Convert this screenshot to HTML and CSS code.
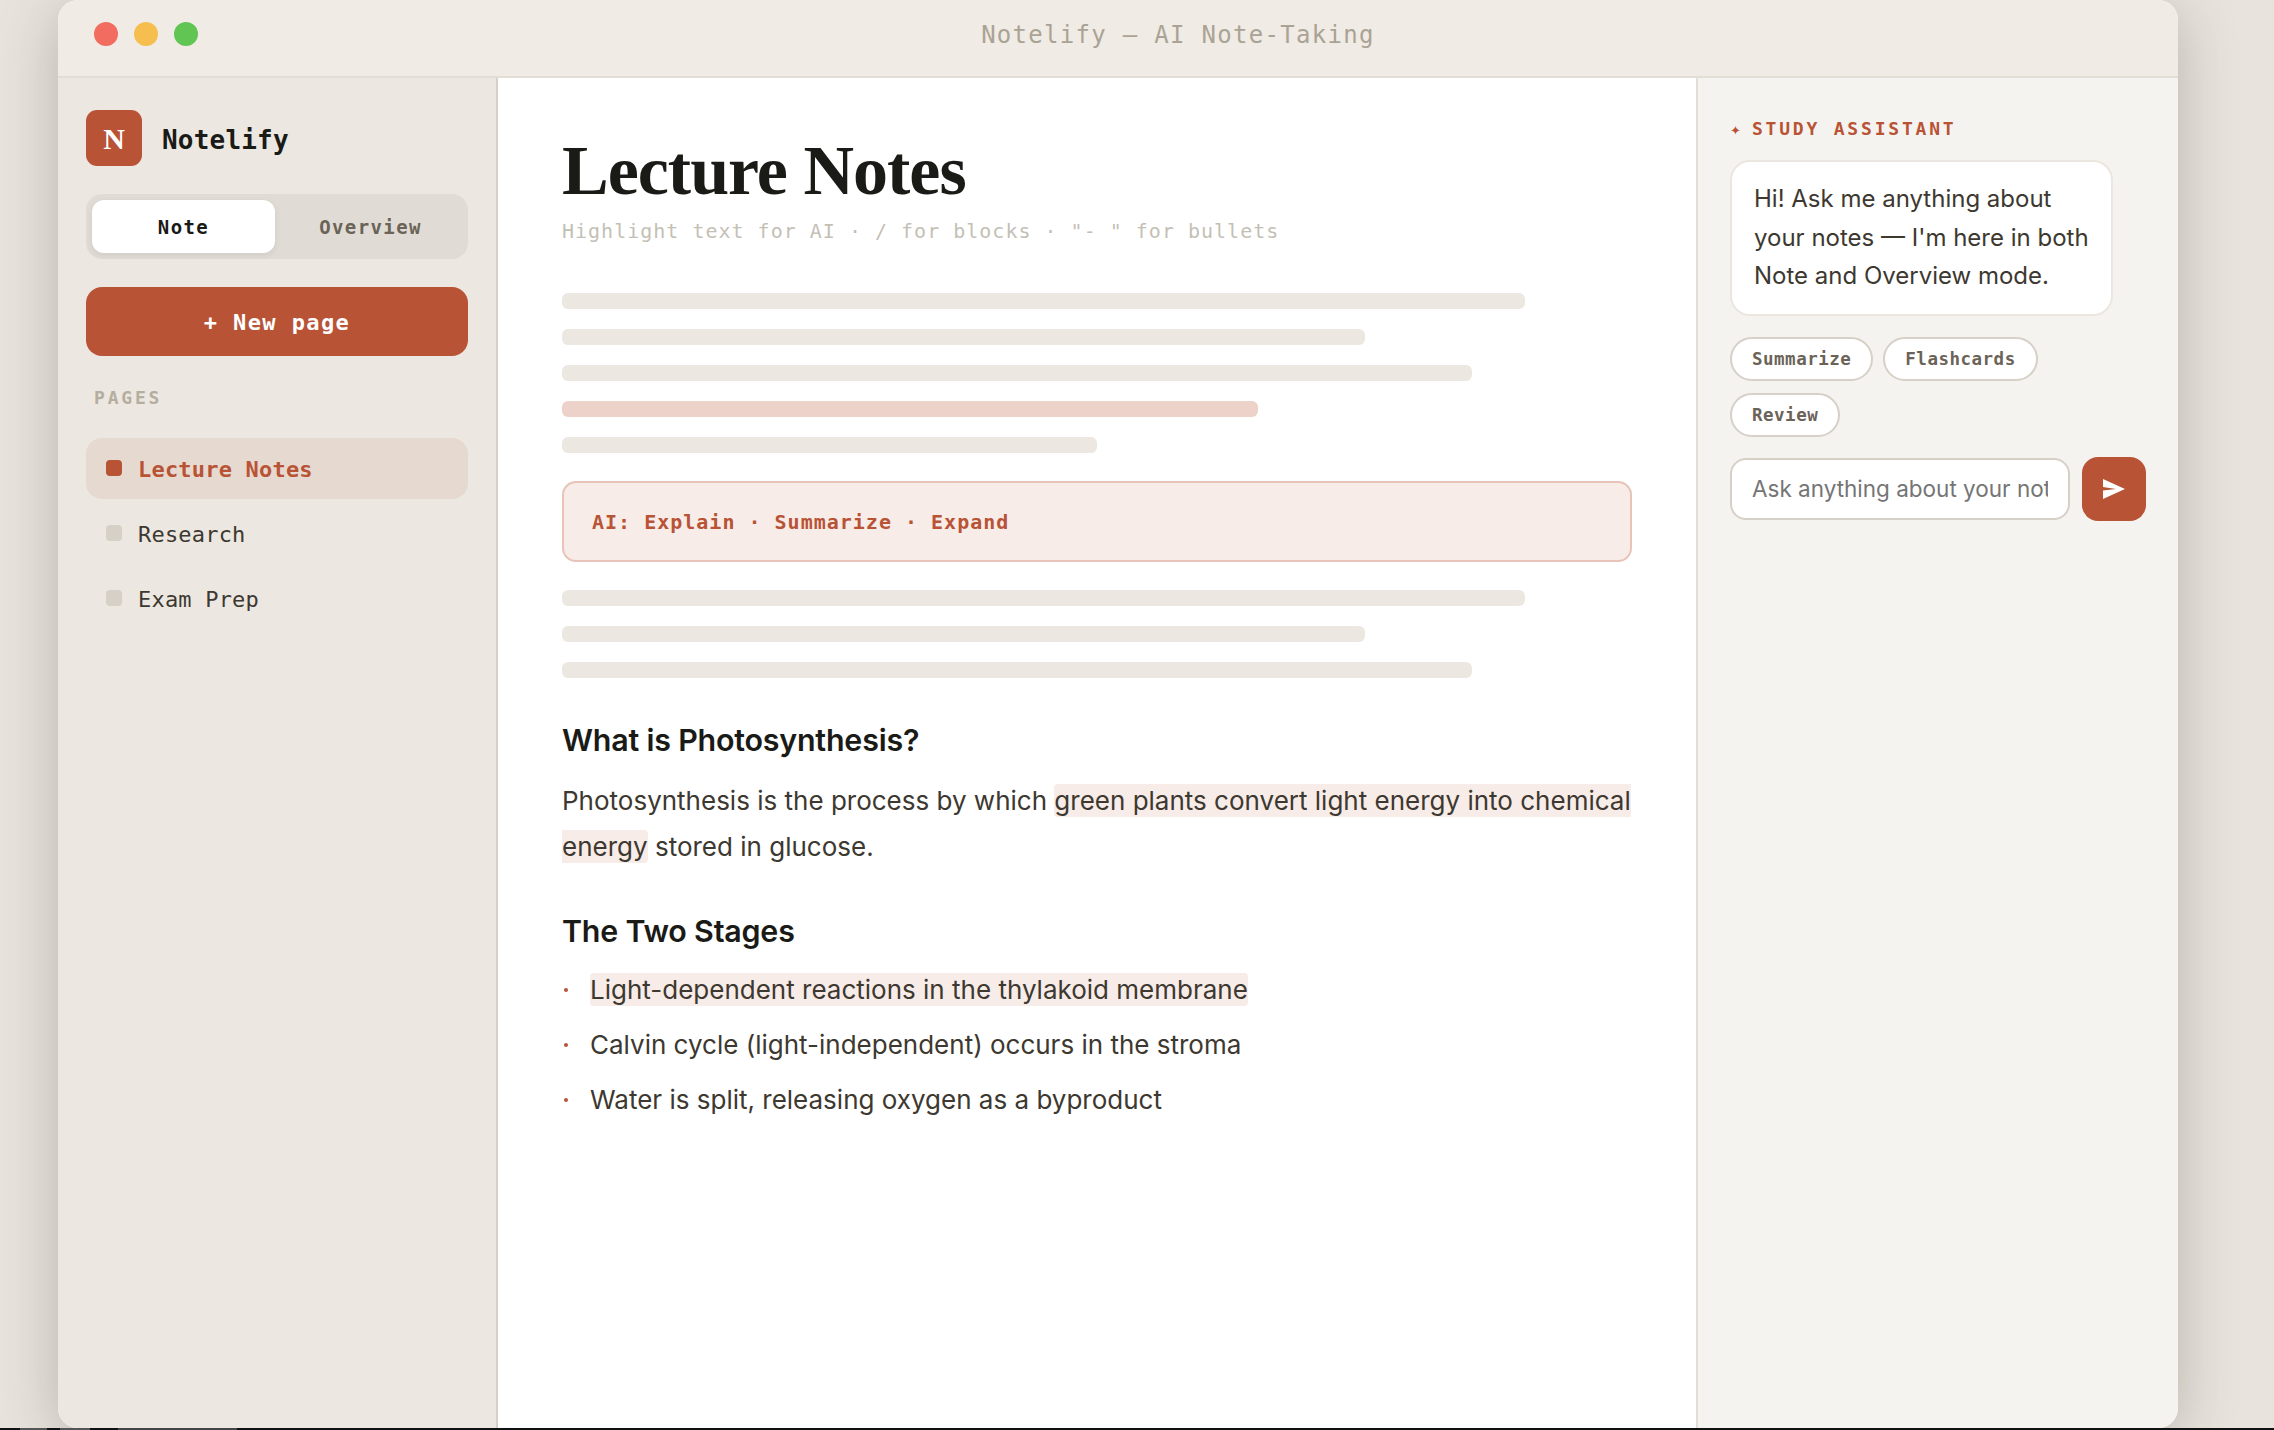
FILE: index.html
```html
<!DOCTYPE html>
<html lang="en">
<head>
    <meta charset="UTF-8">
    <meta name="viewport" content="width=device-width, initial-scale=1.0">
    <title>Notelify</title>
    <link rel="stylesheet" href="styles.css">
</head>
<body>
    <div class="window">
        <header class="titlebar">
            <div class="traffic">
                <span class="light light-red"></span>
                <span class="light light-yellow"></span>
                <span class="light light-green"></span>
            </div>
            <div class="window-title">Notelify — AI Note-Taking</div>
        </header>

        <div class="panes">
            <aside class="sidebar">
                <div class="brand">
                    <div class="brand-logo">N</div>
                    <div class="brand-name">Notelify</div>
                </div>
                <div class="mode-toggle">
                    <div class="mode-tab mode-tab-active">Note</div>
                    <div class="mode-tab">Overview</div>
                </div>
                <button class="new-page">+ New page</button>
                <div class="pages-label">PAGES</div>
                <div class="page-list">
                    <div class="page-item page-item-active"><span class="page-dot"></span>Lecture Notes</div>
                    <div class="page-item"><span class="page-dot"></span>Research</div>
                    <div class="page-item"><span class="page-dot"></span>Exam Prep</div>
                </div>
            </aside>

            <main class="editor">
                <h1 class="doc-title">Lecture Notes</h1>
                <div class="doc-hint">Highlight text for AI · / for blocks · "- " for bullets</div>

                <div class="skeleton">
                    <div class="bar bar-90"></div>
                    <div class="bar bar-75"></div>
                    <div class="bar bar-85"></div>
                    <div class="bar bar-65 bar-accent"></div>
                    <div class="bar bar-50"></div>
                </div>

                <div class="ai-box">AI: Explain · Summarize · Expand</div>

                <div class="skeleton">
                    <div class="bar bar-90"></div>
                    <div class="bar bar-75"></div>
                    <div class="bar bar-85"></div>
                </div>

                <h2 class="doc-heading">What is Photosynthesis?</h2>
                <p class="doc-para">Photosynthesis is the process by which <span class="hl">green plants convert light energy into chemical energy</span> stored in glucose.</p>

                <h2 class="doc-heading doc-heading-second">The Two Stages</h2>
                <ul class="doc-list">
                    <li><span class="hl">Light-dependent reactions in the thylakoid membrane</span></li>
                    <li>Calvin cycle (light-independent) occurs in the stroma</li>
                    <li>Water is split, releasing oxygen as a byproduct</li>
                </ul>
            </main>

            <aside class="assistant">
                <div class="assistant-label"><span class="assistant-star">✦</span>STUDY ASSISTANT</div>
                <div class="bubble">Hi! Ask me anything about your notes — I'm here in both Note and Overview mode.</div>
                <div class="chips">
                    <span class="chip">Summarize</span>
                    <span class="chip">Flashcards</span>
                    <span class="chip">Review</span>
                </div>
                <div class="ask-row">
                    <input type="text" class="ask-input" placeholder="Ask anything about your notes...">
                    <button class="ask-send">
                        <svg width="22" height="20" viewBox="0 0 22 20"><path d="M0 0 L22 10 L0 20 L0 11.5 L13 10 L0 8 Z" fill="#fff"/></svg>
                    </button>
                </div>
            </aside>
        </div>
    </div>
    <div class="bottom-strip"></div>
</body>
</html>
```

FILE: styles.css
```css
* {
    box-sizing: border-box;
}

html, body {
    height: 100%;
}

body {
    margin: 0;
    background: #e8e4dd;
    overflow: hidden;
    font-family: Inter, sans-serif;
    color: #1a1a16;
}

.window {
    position: relative;
    height: 1428px;
    margin: 0 96px 0 58px;
    display: flex;
    flex-direction: column;
    background: #fff;
    border-radius: 20px;
    overflow: hidden;
    box-shadow: 0 10px 60px rgba(60, 50, 40, 0.28);
}

.bottom-strip {
    position: relative;
    height: 2px;
    background: linear-gradient(90deg, #111 20px, #555 20px, #555 47px, #111 47px, #111 60px, #555 60px, #555 90px, #111 90px, #111 118px, #444 118px, #444 237px, #111 237px);
}

/* Title bar */
.titlebar {
    height: 78px;
    flex: none;
    display: flex;
    align-items: center;
    padding-left: 36px;
    background: #f0ebe4;
    border-bottom: 2px solid #e2ded6;
}

.traffic {
    display: flex;
    gap: 16px;
    margin-bottom: 8px;
}

.light {
    width: 24px;
    height: 24px;
    border-radius: 50%;
}

.light-red { background: #f26d60; }
.light-yellow { background: #f5be4f; }
.light-green { background: #61c554; }

.window-title {
    flex: 1;
    text-align: center;
    margin-bottom: 6px;
    padding-right: 20px;
    font-family: "DejaVu Sans Mono", monospace;
    font-size: 24px;
    letter-spacing: 1.3px;
    color: #aaa395;
}

.panes {
    flex: 1;
    display: flex;
    min-height: 0;
}

/* Left sidebar */
.sidebar {
    width: 440px;
    flex: none;
    padding: 32px 28px;
    background: #ece7e1;
    border-right: 2px solid #d6d0c6;
    font-family: "DejaVu Sans Mono", monospace;
}

.brand {
    display: flex;
    align-items: center;
    gap: 20px;
}

.brand-logo {
    width: 56px;
    height: 56px;
    border-radius: 11px;
    display: flex;
    align-items: center;
    justify-content: center;
    background: #b85336;
    color: #fff;
    font-family: "Liberation Serif", serif;
    font-weight: 700;
    font-size: 30px;
    padding-top: 2px;
}

.brand-name {
    margin-top: 3px;
    font-size: 26px;
    font-weight: 700;
    letter-spacing: 0.2px;
}

.mode-toggle {
    display: flex;
    gap: 4px;
    margin-top: 28px;
    padding: 6px;
    height: 65px;
    background: #e0dcd5;
    border-radius: 16px;
}

.mode-tab {
    flex: 1;
    display: flex;
    align-items: center;
    justify-content: center;
    border-radius: 12px;
    font-size: 19px;
    font-weight: 700;
    letter-spacing: 1.4px;
    color: #6b6358;
}

.mode-tab-active {
    background: #fff;
    color: #1a1a16;
    box-shadow: 0 2px 6px rgba(0, 0, 0, 0.08);
}

.new-page {
    display: block;
    width: 100%;
    height: 69px;
    margin-top: 28px;
    padding-top: 3px;
    border: none;
    border-radius: 16px;
    background: #b85336;
    color: #fff;
    font-family: inherit;
    font-size: 22px;
    font-weight: 700;
    letter-spacing: 1.4px;
}

.pages-label {
    margin-top: 31px;
    padding-left: 8px;
    font-size: 18px;
    font-weight: 700;
    letter-spacing: 2.8px;
    color: #b5ae9f;
}

.page-list {
    display: flex;
    flex-direction: column;
    gap: 4px;
    margin-top: 30px;
}

.page-item {
    height: 61px;
    display: flex;
    align-items: center;
    gap: 16px;
    padding-left: 20px;
    padding-top: 2px;
    border-radius: 16px;
    font-size: 22px;
    letter-spacing: 0.2px;
    color: #3d3830;
}

.page-item-active {
    background: #e6d9cf;
    color: #b85336;
    font-weight: 700;
}

.page-dot {
    width: 16px;
    height: 16px;
    margin-top: -3px;
    border-radius: 4px;
    background: #d6d0c6;
}

.page-item-active .page-dot {
    background: #b85336;
}

/* Editor */
.editor {
    flex: 1;
    min-width: 0;
    padding: 53px 64px;
    background: #fff;
}

.doc-title {
    margin: 0;
    font-family: "Liberation Serif", serif;
    font-size: 70px;
    font-weight: 700;
    line-height: 80px;
    letter-spacing: -1px;
}

.doc-hint {
    margin-top: 8px;
    font-family: "DejaVu Sans Mono", monospace;
    font-size: 20px;
    letter-spacing: 1px;
    color: #c4bfb5;
}

.skeleton {
    display: flex;
    flex-direction: column;
    gap: 20px;
    margin-top: 28px;
}

.doc-hint + .skeleton {
    margin-top: 50px;
}

.bar {
    height: 16px;
    border-radius: 6px;
    background: #ece7e1;
}

.bar-90 { width: 90%; }
.bar-85 { width: 85%; }
.bar-75 { width: 75%; }
.bar-65 { width: 65%; }
.bar-50 { width: 50%; }

.bar-accent {
    background: #edd2c9;
}

.ai-box {
    height: 81px;
    display: flex;
    align-items: center;
    margin-top: 28px;
    padding-left: 28px;
    background: #f7ece8;
    border: 2px solid #e8c4b8;
    border-radius: 14px;
    font-family: "DejaVu Sans Mono", monospace;
    font-size: 20px;
    font-weight: 700;
    letter-spacing: 1px;
    color: #b85336;
}

.doc-heading {
    margin: 42px 0 0;
    font-size: 30.4px;
    font-weight: 600;
    line-height: 40px;
    letter-spacing: -0.2px;
}

.doc-heading-second {
    margin-top: 41px;
}

.doc-para {
    margin: 18px 0 0;
    font-size: 26px;
    line-height: 46px;
    color: #3d3830;
}

.hl {
    padding: 1px 0;
    background: #f7ece8;
    border-radius: 4px;
}

.doc-list {
    margin: 11px 0 0;
    padding: 0;
    list-style: none;
}

.doc-list li {
    position: relative;
    height: 55px;
    padding-left: 28px;
    font-size: 26px;
    line-height: 55px;
    color: #3d3830;
}

.doc-list li::before {
    content: "";
    position: absolute;
    left: 2px;
    top: 26px;
    width: 4px;
    height: 4px;
    border-radius: 50%;
    background: #b85336;
}

/* Assistant */
.assistant {
    width: 482px;
    flex: none;
    padding: 40px 32px 32px;
    background: #f5f3ef;
    border-left: 2px solid #e2ded6;
}

.assistant-label {
    font-family: "DejaVu Sans Mono", monospace;
    font-size: 18px;
    font-weight: 700;
    letter-spacing: 2.8px;
    color: #b85336;
}

.assistant-star {
    margin-right: 11px;
    font-family: "DejaVu Sans", sans-serif;
    font-size: 13px;
    letter-spacing: 0;
}

.bubble {
    width: 383px;
    margin-top: 21px;
    padding: 18px 16px 18px 22px;
    background: #fff;
    border: 2px solid #ebe6df;
    border-radius: 20px;
    font-size: 24px;
    line-height: 38.5px;
    color: #3d3830;
}

.chips {
    display: flex;
    flex-wrap: wrap;
    gap: 12px 10px;
    margin-top: 21px;
}

.chip {
    height: 44px;
    display: flex;
    align-items: center;
    padding: 0 20px;
    background: #fff;
    border: 2px solid #d6d0c6;
    border-radius: 22px;
    font-family: "DejaVu Sans Mono", monospace;
    font-size: 17.5px;
    font-weight: 700;
    letter-spacing: 0.5px;
    color: #6b6358;
}

.ask-row {
    display: flex;
    align-items: center;
    gap: 12px;
    margin-top: 20px;
}

.ask-input {
    flex: 1;
    min-width: 0;
    height: 62px;
    padding: 0 20px;
    background: #fff;
    border: 2px solid #d6d0c6;
    border-radius: 16px;
    font-family: Inter, sans-serif;
    font-size: 22.5px;
}

.ask-input::placeholder {
    color: #757575;
    opacity: 1;
}

.ask-send {
    width: 64px;
    height: 64px;
    flex: none;
    display: flex;
    align-items: center;
    justify-content: center;
    padding: 0;
    border: none;
    border-radius: 16px;
    background: #b85336;
}
```
